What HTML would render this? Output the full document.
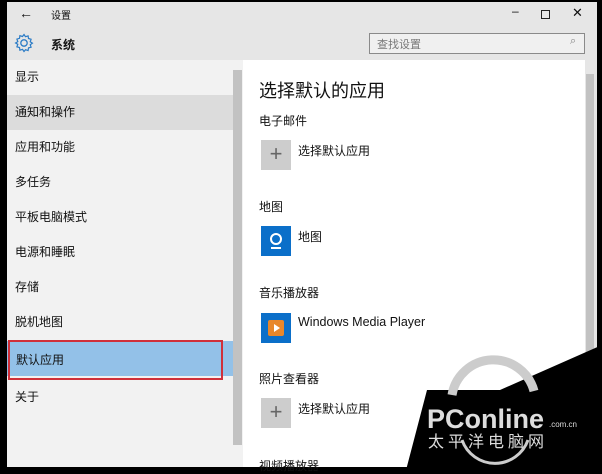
<!DOCTYPE html>
<html><head><meta charset="utf-8"><style>
*{margin:0;padding:0;box-sizing:border-box}
body{width:602px;height:474px;background:#000;position:relative;overflow:hidden;font-family:"Liberation Sans","Noto Sans CJK SC",sans-serif;color:#111}
.win{position:absolute;left:7px;top:2px;width:590px;height:465px;background:#e6e6e6}
.title{position:absolute;left:0;top:0;width:100%;height:60px;background:#e6e6e6}
.nav{position:absolute;left:0;top:58px;width:236px;height:407px;background:#f2f2f2}
.nav .it{position:absolute;left:0;width:226px;height:35px;line-height:35px;padding-left:8px;font-size:12px}
.nav .sb{position:absolute;left:226px;top:10px;width:9px;height:375px;background:#c2c2c2}
.content{position:absolute;left:236px;top:58px;width:342px;height:407px;background:#fff}
.rsb{position:absolute;left:579px;top:72px;width:8px;height:393px;background:#c2c2c2}
.t{position:absolute;font-size:12px}
.plus{position:absolute;width:30px;height:30px;background:#cdcdcd;color:#666;font-size:22px;line-height:28px;text-align:center;font-weight:300}
.blue{position:absolute;width:30px;height:30px;background:#0b6fc9}
</style></head><body>
<div class="win">
 <div class="title">
  <div class="t" style="left:12px;top:3px;font-size:14px">←</div>
  <div class="t" style="left:44px;top:5px;font-size:10px">设置</div>
  <div class="t" style="left:505px;top:2px;font-size:12px">–</div>
  <div style="position:absolute;left:534px;top:8px;width:9px;height:9px;border:1px solid #222"></div>
  <div class="t" style="left:565px;top:3px;font-size:13px">✕</div>
  <svg style="position:absolute;left:7px;top:31px" width="20" height="20" viewBox="0 0 20 20"><circle cx="10" cy="10" r="3.2" fill="none" stroke="#2c7cc6" stroke-width="1.3"/><path d="M10 1.5l1.5 2.2 2.6-.8.4 2.6 2.6.8-.9 2.5 2.2 1.4-2.2 1.5.9 2.5-2.6.7-.4 2.7-2.6-.9L10 18.5l-1.5-2.2-2.6.9-.4-2.7-2.6-.7.9-2.5L1.6 10l2.2-1.4-.9-2.5 2.6-.8.4-2.6 2.6.8z" fill="none" stroke="#2c7cc6" stroke-width="1.2"/></svg>
  <div class="t" style="left:44px;top:34px;font-size:12px;font-weight:bold">系统</div>
  <div style="position:absolute;left:362px;top:31px;width:216px;height:21px;border:1px solid #8a8a8a;background:#f0f0f0"></div>
  <div class="t" style="left:370px;top:34px;font-size:11px;color:#777">查找设置</div>
  <div class="t" style="left:563px;top:33px;font-size:11px;color:#888">⌕</div>
 </div>
 <div class="nav">
  <div class="it" style="top:0">显示</div>
  <div class="it" style="top:35px;background:#dcdcdc">通知和操作</div>
  <div class="it" style="top:70px">应用和功能</div>
  <div class="it" style="top:105px">多任务</div>
  <div class="it" style="top:140px">平板电脑模式</div>
  <div class="it" style="top:175px">电源和睡眠</div>
  <div class="it" style="top:210px">存储</div>
  <div class="it" style="top:245px">脱机地图</div>
  <div class="it" style="top:281px;width:235px;background:#93c1e8"></div>
  <div class="it" style="top:280px;left:1px;width:215px;height:40px;border:2px solid #d0303a;background:transparent;line-height:36px;padding-left:6px">默认应用</div>
  <div class="it" style="top:320px">关于</div>
  <div class="sb"></div>
 </div>
 <div class="content">
  <div class="t" style="left:16px;top:17px;font-size:18px">选择默认的应用</div>
  <div class="t" style="left:16px;top:52px">电子邮件</div>
  <div class="plus" style="left:18px;top:80px">+</div>
  <div class="t" style="left:55px;top:82px">选择默认应用</div>
  <div class="t" style="left:16px;top:138px">地图</div>
  <div class="blue" style="left:18px;top:166px"><svg width="30" height="30"><circle cx="15" cy="13" r="5" fill="none" stroke="#fff" stroke-width="2"/><path d="M10 22h10" stroke="#fff" stroke-width="2"/></svg></div>
  <div class="t" style="left:55px;top:168px">地图</div>
  <div class="t" style="left:16px;top:224px">音乐播放器</div>
  <div class="blue" style="left:18px;top:253px"><svg width="30" height="30"><rect x="7" y="7" width="16" height="16" rx="2" fill="#e8872b"/><path d="M13 11l6 4-6 4z" fill="#fff"/></svg></div>
  <div class="t" style="left:55px;top:255px;font-size:12.5px">Windows Media Player</div>
  <div class="t" style="left:16px;top:310px">照片查看器</div>
  <div class="plus" style="left:18px;top:338px">+</div>
  <div class="t" style="left:55px;top:340px">选择默认应用</div>
  <div class="t" style="left:16px;top:397px">视频播放器</div>
 </div>
 <div class="rsb"></div>
</div>
<svg style="position:absolute;left:0;top:0" width="602" height="474" viewBox="0 0 602 474">
 <polygon points="427,390 500,390 602,345 602,474 405,474" fill="#000"/>
 <path d="M452 395a42 42 0 0 1 82 -4" fill="none" stroke="#ccc" stroke-width="9"/>
 <path d="M462 440a35 35 0 0 0 66 0" fill="none" stroke="#ccc" stroke-width="3"/>
 <text x="427" y="428" font-family="Liberation Sans" font-weight="bold" font-size="27" fill="#ddd">PConline</text>
 <text x="549" y="427" font-family="Liberation Sans" font-size="8" fill="#ddd">.com.cn</text>
 <text x="428" y="447" font-family="Noto Sans CJK SC" font-size="16" fill="#ddd" letter-spacing="4">太平洋电脑网</text>
</svg>
</body></html>
